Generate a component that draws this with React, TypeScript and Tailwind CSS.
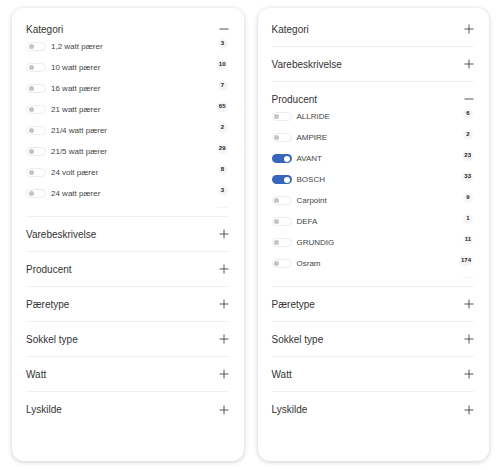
import React from "react";

type Item = { label: string; count: number; on?: boolean };

const kategori: Item[] = [
	{ label: "1,2 watt pærer", count: 3 },
	{ label: "10 watt pærer", count: 10 },
	{ label: "16 watt pærer", count: 7 },
	{ label: "21 watt pærer", count: 65 },
	{ label: "21/4 watt pærer", count: 2 },
	{ label: "21/5 watt pærer", count: 29 },
	{ label: "24 volt pærer", count: 8 },
	{ label: "24 watt pærer", count: 3 },
];

const producent: Item[] = [
	{ label: "ALLRIDE", count: 6 },
	{ label: "AMPIRE", count: 2 },
	{ label: "AVANT", count: 23, on: true },
	{ label: "BOSCH", count: 33, on: true },
	{ label: "Carpoint", count: 9 },
	{ label: "DEFA", count: 1 },
	{ label: "GRUNDIG", count: 11 },
	{ label: "Osram", count: 174 },
];

const sections = ["Kategori", "Varebeskrivelse", "Producent", "Pæretype", "Sokkel type", "Watt", "Lyskilde"];

function Plus() {
	return (
		<svg width="10" height="10" viewBox="0 0 10 10" className="text-[#555]">
			<path d="M5 0.5V9.5M0.5 5H9.5" stroke="currentColor" strokeWidth="1" />
		</svg>
	);
}

function Minus() {
	return (
		<svg width="10" height="10" viewBox="0 0 10 10" className="text-[#555]">
			<path d="M0.5 5H9.5" stroke="currentColor" strokeWidth="1" />
		</svg>
	);
}

function Toggle({ on }: { on?: boolean }) {
	return on ? (
		<span className="flex h-[9px] w-[20px] items-center justify-end rounded-full bg-[#3866bd] pr-[1.5px]">
			<span className="h-[6px] w-[6px] rounded-full bg-white" />
		</span>
	) : (
		<span className="flex h-[9px] w-[20px] items-center rounded-full border border-[#ececec] bg-white pl-[1.5px]">
			<span className="h-[5px] w-[5px] rounded-full bg-[#c4c4c4]" />
		</span>
	);
}

function Row({ item }: { item: Item }) {
	return (
		<div className="flex h-[21px] items-center">
			<Toggle on={item.on} />
			<span className="ml-[5px] flex-1 text-[8px] text-[#444]">{item.label}</span>
			<span className="mb-[6px] mr-[1px] flex h-[10px] min-w-[10px] items-center justify-center rounded-full bg-[#f5f5f5] px-[2px] text-[6px] font-bold text-[#222]">
				{item.count}
			</span>
		</div>
	);
}

function Section({ title, items, last }: { title: string; items?: Item[]; last?: boolean }) {
	if (items) {
		return (
			<div className="flex flex-col border-b border-[#f0f0f0] pb-[8px]">
				<div className="flex h-[24px] items-end justify-between">
					<span className="text-[10px] leading-[13px] text-[#333]">{title}</span>
					<span className="pb-[2px]">
						<Minus />
					</span>
				</div>
				{items.map((it) => (
					<Row key={it.label} item={it} />
				))}
				<div className="mr-[1px] mt-[3px] h-px w-[11px] self-end bg-[#f3f3f3]" />
			</div>
		);
	}
	return (
		<div className={`flex h-[35px] items-center justify-between ${last ? "" : "border-b border-[#f0f0f0]"}`}>
			<span className="text-[10px] text-[#333]">{title}</span>
			<Plus />
		</div>
	);
}

function Card({ open, items }: { open: string; items: Item[] }) {
	return (
		<div className="h-[453px] rounded-[12px] bg-white pl-[14px] pr-[15px] pt-[4px] shadow-[0_1px_5px_rgba(0,0,0,0.2)]">
			{sections.map((s, i) => (
				<Section key={s} title={s} items={s === open ? items : undefined} last={i === sections.length - 1} />
			))}
		</div>
	);
}

export default function App() {
	return (
		<main className="h-[470px] w-[504px] bg-white pl-[12px] pr-[15px] pt-[8px] font-['Liberation_Sans',Arial,sans-serif]">
			<div className="grid grid-cols-2 gap-[14px]">
				<Card open="Kategori" items={kategori} />
				<Card open="Producent" items={producent} />
			</div>
		</main>
	);
}
